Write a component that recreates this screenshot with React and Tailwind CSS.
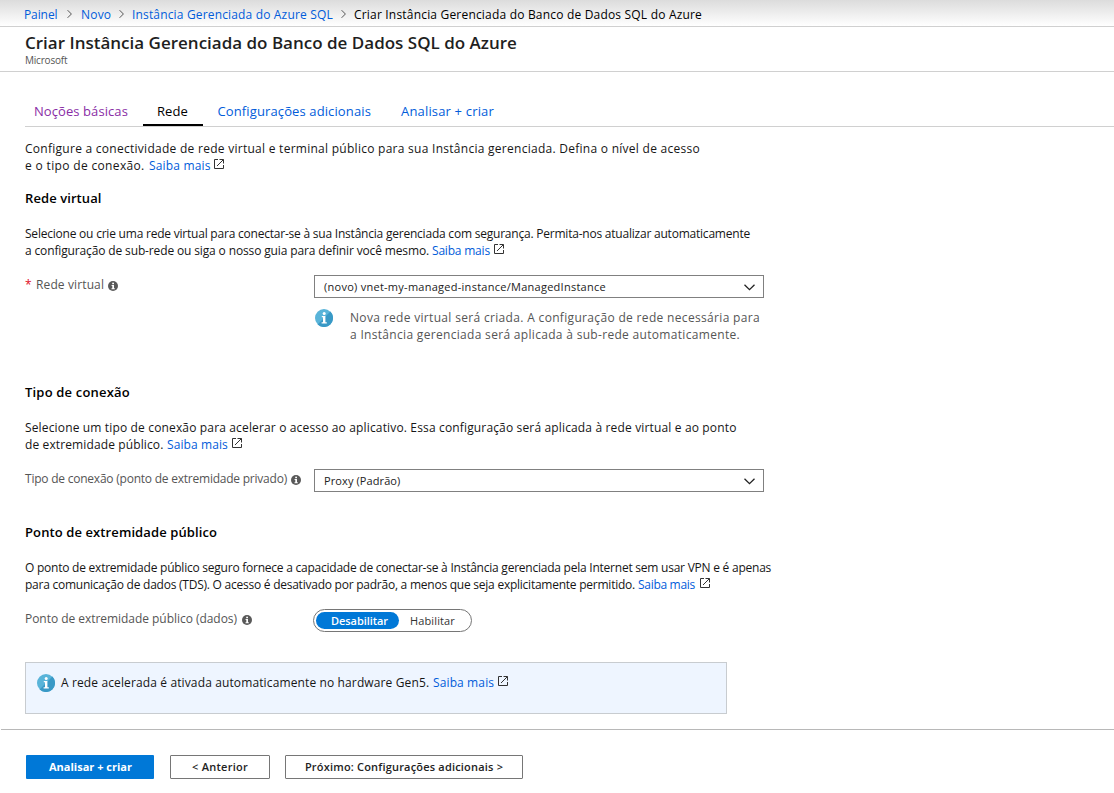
import React from "react";

const LINK = "text-[#015cda]";

function ExternalIcon({ className = "" }) {
  return (
    <svg className={`h-[10px] w-[10px] shrink-0 ${className}`} viewBox="0 0 10 10" fill="none" stroke="#333" strokeWidth="1">
      <path d="M4 0.5H0.5V9.5H9.5V6" />
      <path d="M5.5 0.5H9.5V4.5" />
      <path d="M9.3 0.7L3 7" />
    </svg>
  );
}

function HintIcon({ className = "" }) {
  return (
    <svg className={`h-[10px] w-[10px] shrink-0 ${className}`} viewBox="0 0 10 10">
      <circle cx="5" cy="5" r="5" fill="#595959" />
      <rect x="4.2" y="1.7" width="1.8" height="1.5" fill="#fff" />
      <path d="M3.6 4H6V7.2H6.8V8.2H3.5V7.2H4.3V5H3.6Z" fill="#fff" />
    </svg>
  );
}

function InfoIcon({ className = "" }) {
  return (
    <svg className={`h-[18px] w-[18px] shrink-0 ${className}`} viewBox="0 0 18 18">
      <circle cx="9" cy="9" r="9" fill="#59b4d9" />
      <path d="M15.4 2.6A9 9 0 0 1 2.6 15.4Z" fill="#3999c6" />
      <circle cx="9.2" cy="4.4" r="1.5" fill="#fff" />
      <path d="M6.8 7H10.4V13.2H11.8V14.4H6.6V13.2H8V8.2H6.8Z" fill="#fff" />
    </svg>
  );
}

function Crumb() {
  return (
    <svg className="-mt-px h-2 w-[5px] shrink-0" viewBox="0 0 5 8" fill="none" stroke="#555" strokeWidth="1">
      <path d="M0.6 0.2L4.4 4L0.6 7.8" />
    </svg>
  );
}

function Select({ children }) {
  return (
    <div className="flex h-[23px] w-[450px] items-center justify-between border border-[#808080] pr-[8px] pl-[9px] text-[11px] leading-[17px] text-[#222]">
      {children}
      <svg className="mt-px h-[7px] w-[11px]" viewBox="0 0 11 7" fill="none" stroke="#222" strokeWidth="1.3">
        <path d="M0.5 0.7L5.5 5.7L10.5 0.7" />
      </svg>
    </div>
  );
}

function Heading({ className, children }) {
  return <h2 className={`text-[13px] leading-[18px] font-semibold text-black ${className}`}>{children}</h2>;
}

export default function App() {
  return (
    <div className="h-[793px] w-[1114px] overflow-hidden bg-white font-['Open_Sans',sans-serif] text-[12px] leading-[17px] whitespace-nowrap text-[#161616]">
      <nav className="flex h-[27px] items-center border-b border-[#d0d0d0] bg-linear-to-b from-[#dcdcdc] to-white pt-[3px] pl-[24px] text-black">
        <a className={`w-[43px] tracking-[-0.1px] ${LINK}`}>Painel</a>
        <Crumb />
        <a className={`ml-[9px] w-[38px] tracking-[0.2px] ${LINK}`}>Novo</a>
        <Crumb />
        <a className={`ml-[8px] w-[209px] tracking-[0.16px] ${LINK}`}>Instância Gerenciada do Azure SQL</a>
        <Crumb />
        <span className="ml-[8px] tracking-[0.19px]">Criar Instância Gerenciada do Banco de Dados SQL do Azure</span>
      </nav>
      <header className="h-[45px] border-b border-[#d0d0d0] pt-[4px] pl-[25px]">
        <h1 className="text-[17px] leading-[23px] font-semibold text-[#1f1f1f]">Criar Instância Gerenciada do Banco de Dados SQL do Azure</h1>
        <p className="text-[10px] leading-[12px] tracking-[-0.2px] text-[#555]">Microsoft</p>
      </header>
      <main className="pl-[25px]">
        <div className="mt-[30px] flex border-b border-[#d0d0d0] text-[13px] leading-[18px]">
          <a className="w-[118px] pl-[9px] tracking-[0.08px] text-[#8a2da5]">Noções básicas</a>
          <a className="h-[24px] w-[60px] border-b-2 border-black pl-[14px] tracking-[0.1px] text-black">Rede</a>
          <a className={`w-[184px] pl-[14.5px] tracking-[0.12px] ${LINK}`}>Configurações adicionais</a>
          <a className={`pl-[14px] tracking-[0.17px] ${LINK}`}>Analisar + criar</a>
        </div>

        <div className="mt-[13px]">
          <p className="tracking-[0.269px]">Configure a conectividade de rede virtual e terminal público para sua Instância gerenciada. Defina o nível de acesso</p>
          <p className="flex">
            <span className="w-[124px] tracking-[0.34px]">e o tipo de conexão.</span>
            <a className={`w-[65px] tracking-[0.17px] ${LINK}`}>Saiba mais</a>
            <ExternalIcon className="mt-[2px]" />
          </p>
        </div>

        <Heading className="mt-[15px] tracking-[0.08px]">Rede virtual</Heading>
        <div className="mt-[18px]">
          <p className="tracking-[-0.218px]">Selecione ou crie uma rede virtual para conectar-se à sua Instância gerenciada com segurança. Permita-nos atualizar automaticamente</p>
          <p className="flex">
            <span className="w-[407px] tracking-[-0.138px]">a configuração de sub-rede ou siga o nosso guia para definir você mesmo.</span>
            <a className={`w-[62px] tracking-[-0.2px] ${LINK}`}>Saiba mais</a>
            <ExternalIcon className="mt-[2px]" />
          </p>
        </div>
        <div className="mt-[16px] flex">
          <div className="flex w-[289px] pt-[1px] text-[#555]">
            <span className="w-[11px] text-[#e00b1c]">*</span>
            <span className="w-[72px] tracking-[0.12px]">Rede virtual</span>
            <HintIcon className="mt-[5px]" />
          </div>
          <Select><span className="tracking-[0.264px]">(novo) vnet-my-managed-instance/ManagedInstance</span></Select>
        </div>
        <div className="mt-[11px] flex pl-[290px] text-[#555]">
          <InfoIcon />
          <div className="ml-[17px]">
            <p className="tracking-[0.328px]">Nova rede virtual será criada. A configuração de rede necessária para</p>
            <p className="tracking-[0.313px]">a Instância gerenciada será aplicada à sub-rede automaticamente.</p>
          </div>
        </div>

        <Heading className="mt-[40px] tracking-[0.19px]">Tipo de conexão</Heading>
        <div className="mt-[18px]">
          <p className="tracking-[0.152px]">Selecione um tipo de conexão para acelerar o acesso ao aplicativo. Essa configuração será aplicada à rede virtual e ao ponto</p>
          <p className="flex">
            <span className="w-[142px] tracking-[0.12px]">de extremidade público.</span>
            <a className={`w-[65px] tracking-[0.1px] ${LINK}`}>Saiba mais</a>
            <ExternalIcon className="mt-[2px]" />
          </p>
        </div>
        <div className="mt-[16px] flex">
          <div className="flex w-[289px] pt-[1px] text-[#555]">
            <span className="w-[266px] tracking-[-0.228px]">Tipo de conexão (ponto de extremidade privado)</span>
            <HintIcon className="mt-[5px]" />
          </div>
          <Select><span className="tracking-[0.1px]">Proxy (Padrão)</span></Select>
        </div>

        <Heading className="mt-[31px] tracking-[0.1px]">Ponto de extremidade público</Heading>
        <div className="mt-[18px]">
          <p className="tracking-[-0.236px]">O ponto de extremidade público seguro fornece a capacidade de conectar-se à Instância gerenciada pela Internet sem usar VPN e é apenas</p>
          <p className="flex">
            <span className="w-[613px] tracking-[-0.242px]">para comunicação de dados (TDS). O acesso é desativado por padrão, a menos que seja explicitamente permitido.</span>
            <a className={`w-[62px] tracking-[-0.3px] ${LINK}`}>Saiba mais</a>
            <ExternalIcon className="mt-[2px]" />
          </p>
        </div>
        <div className="mt-[16px] flex">
          <div className="flex w-[288px] pt-[1px] text-[#555]">
            <span className="w-[217px] tracking-[-0.04px]">Ponto de extremidade público (dados)</span>
            <HintIcon className="mt-[5px]" />
          </div>
          <div className="flex h-[23px] w-[159px] items-center rounded-full border border-[#767676] pl-[2px] text-[11px]">
            <span className="w-[83px] rounded-full bg-[#0078d7] pl-[15px] font-semibold tracking-[-0.06px] text-white">Desabilitar</span>
            <span className="pl-[11px] tracking-[0.13px] text-[#333]">Habilitar</span>
          </div>
        </div>

        <div className="mt-[30px] flex h-[52px] w-[702px] border border-[#c8ccd0] bg-[#eef5ff] pt-[11px] pl-[11px]">
          <InfoIcon />
          <span className="ml-[6px] w-[372px] tracking-[0.125px]">A rede acelerada é ativada automaticamente no hardware Gen5.</span>
          <a className={`w-[65px] tracking-[0.12px] ${LINK}`}>Saiba mais</a>
          <ExternalIcon className="mt-[2px]" />
        </div>
      </main>
      <footer className="mt-[15px] ml-px flex gap-[16px] border-t border-[#b8b8b8] pt-[25px] pl-[25px] text-[11px] text-[#222]">
        <button className="h-[24px] w-[128px] rounded-[1px] bg-[#0078d7] pb-[2px] pl-[1px] font-bold text-white">Analisar + criar</button>
        <button className="h-[24px] w-[100px] rounded-[1px] border border-[#767676] pb-[2px] font-semibold tracking-[0.26px]">&lt; Anterior</button>
        <button className="-ml-px h-[24px] w-[238px] rounded-[1px] border border-[#767676] pb-[2px] font-semibold tracking-[0.19px]">Próximo: Configurações adicionais &gt;</button>
      </footer>
    </div>
  );
}
